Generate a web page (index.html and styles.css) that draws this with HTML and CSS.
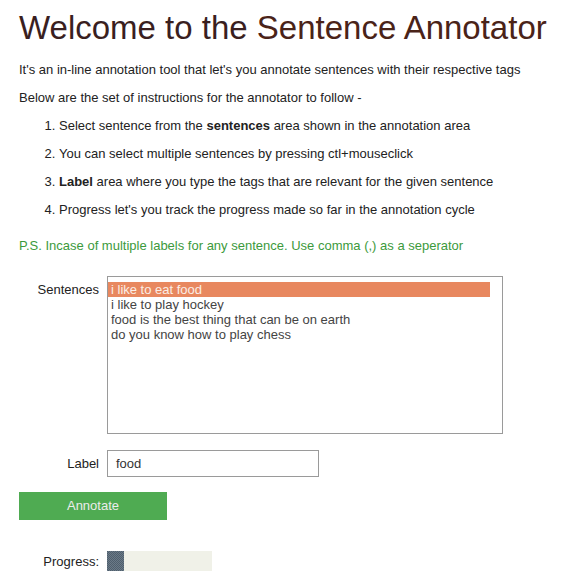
FILE: index.html
```html
<!DOCTYPE html>
<html>
<head>
<meta charset="utf-8">
<link rel="stylesheet" href="styles.css">
</head>
<body>
<div class="page">
  <h1 class="title">Welcome to the <span class="accent">Sentence Annotator</span></h1>
  <p class="text">It's an in-line annotation tool that let's you annotate sentences with their respective tags</p>
  <p class="text">Below are the set of instructions for the annotator to follow -</p>
  <ol class="steps">
    <li>Select sentence from the <b>sentences</b> area shown in the annotation area</li>
    <li>You can select multiple sentences by pressing ctl+mouseclick</li>
    <li><b>Label</b> area where you type the tags that are relevant for the given sentence</li>
    <li>Progress let's you track the progress made so far in the annotation cycle</li>
  </ol>
  <p class="note">P.S. Incase of multiple labels for any sentence. Use comma (,) as a seperator</p>

  <div class="form">
    <div class="row row-sentences">
      <span class="lbl">Sentences</span>
      <div class="listbox">
        <div class="opt selected">i like to eat food</div>
        <div class="opt">i like to play hockey</div>
        <div class="opt">food is the best thing that can be on earth</div>
        <div class="opt">do you know how to play chess</div>
      </div>
    </div>
    <div class="row row-label">
      <span class="lbl">Label</span>
      <div class="input">food</div>
    </div>
    <div class="btn">Annotate</div>
    <div class="row row-progress">
      <span class="lbl">Progress:</span>
      <div class="progress"><div class="fill" style="width:17px"></div></div>
    </div>
  </div>
</div>
</body>
</html>
```
FILE: styles.css
```css
html, body {
  margin: 0;
  padding: 0;
  background: #ffffff;
}
body {
  font-family: "Liberation Sans", Arial, sans-serif;
  font-size: 13px;
  color: #222;
}
.page {
  padding: 0 19px;
}
.title {
  margin: 0;
  padding-top: 9px;
  font-size: 33px;
  font-weight: normal;
  line-height: 38px;
  color: #3a1f1f;
  white-space: nowrap;
}
.title .accent {
  color: #4a2318;
}
.text {
  margin: 16px 0 0;
  line-height: 14px;
}
.text + .text {
  margin-top: 14px;
}
.steps {
  margin: 14px 0 0;
  padding-left: 40px;
}
.steps li {
  line-height: 14px;
  margin-bottom: 14px;
}
.note {
  margin: 22px 0 0;
  line-height: 14px;
  color: #3c9a3c;
}
.form {
  margin-top: 23px;
}
.row {
  display: grid;
  grid-template-columns: 80px auto;
  column-gap: 8px;
  align-items: start;
}
.lbl {
  text-align: right;
  color: #222;
  line-height: 15px;
}
.row-sentences .lbl {
  padding-top: 6px;
}
.listbox {
  height: 150px;
  border: 1px solid #9a9a9a;
  padding: 5px 12px 1px 0;
  width: 382px;
}
.opt {
  line-height: 15px;
  padding-left: 3px;
  color: #444;
}
.opt.selected {
  background: #e8885f;
  color: #fbeee6;
}
.row-label {
  margin-top: 16px;
  align-items: center;
}
.input {
  height: 25px;
  border: 1px solid #9a9a9a;
  line-height: 25px;
  padding-left: 8px;
  width: 202px;
  color: #333;
}
.btn {
  margin-top: 15px;
  width: 148px;
  height: 28px;
  line-height: 28px;
  text-align: center;
  background: #4fab52;
  color: #ececec;
}
.row-progress {
  margin-top: 31px;
  align-items: center;
}
.progress {
  width: 105px;
  height: 20px;
  background: #f0f1e8;
  display: flex;
}
.fill {
  height: 100%;
  background-color: #5b6b79;
  background-image: repeating-conic-gradient(#6b7a87 0 25%, #4f5f6d 0 50%);
  background-size: 2px 2px;
}
```
